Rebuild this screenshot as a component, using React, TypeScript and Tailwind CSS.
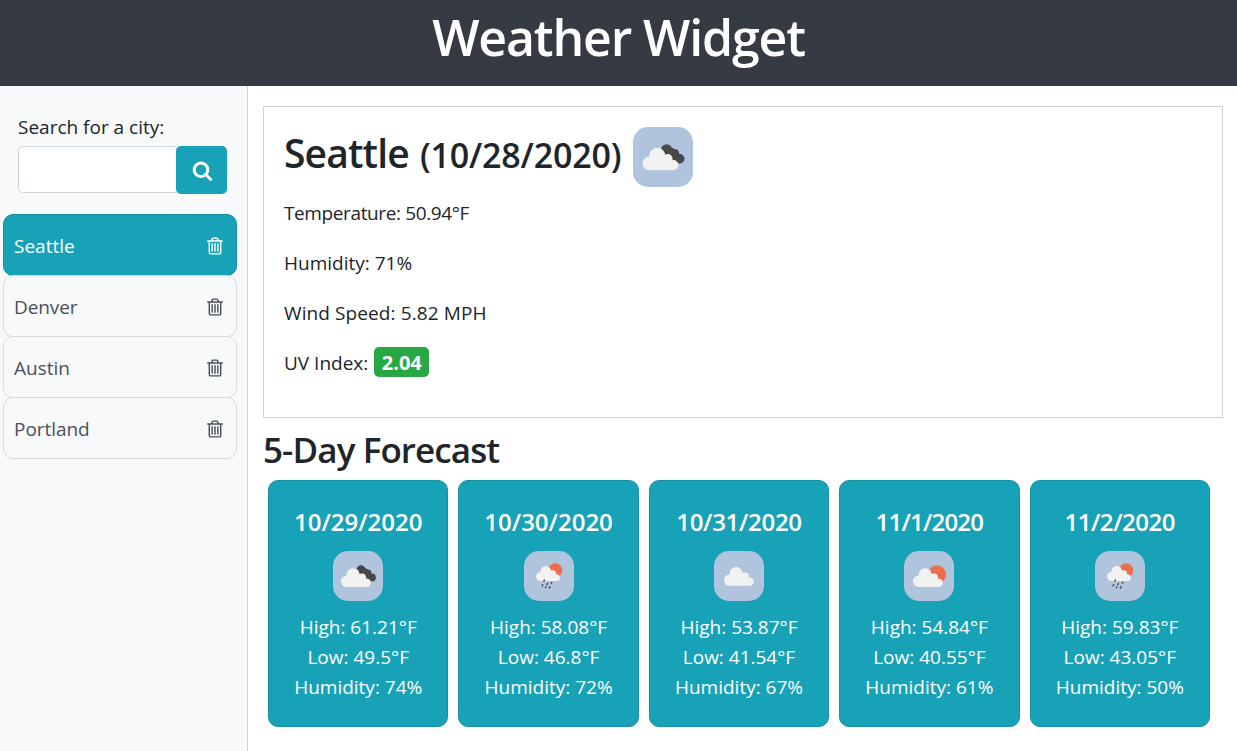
import React from "react";

type Kind = "broken" | "rain" | "cloud" | "partly";

const cities = [
  { name: "Seattle", tracking: "tracking-normal" },
  { name: "Denver", tracking: "tracking-[-0.1px]" },
  { name: "Austin", tracking: "tracking-normal" },
  { name: "Portland", tracking: "tracking-[-0.05px]" },
];

const days: { date: string; tracking: string; kind: Kind; high: string; low: string; humidity: string }[] = [
  { date: "10/29/2020", tracking: "tracking-normal", kind: "broken", high: "61.21", low: "49.5", humidity: "74" },
  { date: "10/30/2020", tracking: "tracking-normal", kind: "rain", high: "58.08", low: "46.8", humidity: "72" },
  { date: "10/31/2020", tracking: "tracking-[-0.3px]", kind: "cloud", high: "53.87", low: "41.54", humidity: "67" },
  { date: "11/1/2020", tracking: "tracking-[-0.8px]", kind: "partly", high: "54.84", low: "40.55", humidity: "61" },
  { date: "11/2/2020", tracking: "tracking-[-0.45px]", kind: "rain", high: "59.83", low: "43.05", humidity: "50" },
];

function TrashIcon() {
  return (
    <svg viewBox="0 0 1792 1792" className="h-5 w-5" fill="currentColor">
      <path d="M704 1376v-704q0-14-9-23t-23-9h-64q-14 0-23 9t-9 23v704q0 14 9 23t23 9h64q14 0 23-9t9-23zm256 0v-704q0-14-9-23t-23-9h-64q-14 0-23 9t-9 23v704q0 14 9 23t23 9h64q14 0 23-9t9-23zm256 0v-704q0-14-9-23t-23-9h-64q-14 0-23 9t-9 23v704q0 14 9 23t23 9h64q14 0 23-9t9-23zm128 84v-948h-896v948q0 22 7 40.5t14.5 27 10.5 8.5h832q3 0 10.5-8.5t14.5-27 7-40.5zm-672-1076h448l-48-117q-7-9-17-11h-317q-10 2-17 11zm928 32v64q0 14-9 23t-23 9h-96v948q0 83-47 143.5t-113 60.5h-832q-66 0-113-58.5t-47-141.5v-952h-96q-14 0-23-9t-9-23v-64q0-14 9-23t23-9h309l70-167q15-37 54-63t79-26h320q40 0 79 26t54 63l70 167h309q14 0 23 9t9 23z" />
    </svg>
  );
}

function SearchIcon() {
  return (
    <svg viewBox="0 0 1792 1792" className="h-[21px] w-[21px]" fill="currentColor">
      <path d="M1216 832q0-185-131.5-316.5t-316.5-131.5-316.5 131.5-131.5 316.5 131.5 316.5 316.5 131.5 316.5-131.5 131.5-316.5zm512 832q0 52-38 90t-90 38q-54 0-90-38l-343-342q-179 124-399 124-143 0-273.5-55.5t-225-150-150-225-55.5-273.5 55.5-273.5 150-225 225-150 273.5-55.5 273.5 55.5 225 150 150 225 55.5 273.5q0 220-124 399l343 343q37 37 37 90z" />
    </svg>
  );
}

function Cloud({ transform }: { transform?: string }) {
  return (
    <g transform={transform} fill="#f2f2f2">
      <circle cx="13.7" cy="30.3" r="5.7" />
      <circle cx="20.2" cy="23.9" r="6.6" />
      <circle cx="29" cy="26.6" r="4" />
      <circle cx="33.6" cy="31.8" r="4.2" />
      <path d="M13.7 25h15l5 4v7h-20z" />
    </g>
  );
}

function WeatherIcon({ kind, className }: { kind: Kind; className: string }) {
  return (
    <svg viewBox="0 0 50 50" className={className}>
      {kind === "broken" && (
        <>
          <g fill="#484848">
            <circle cx="28" cy="18.9" r="4.6" />
            <circle cx="35" cy="22" r="3.4" />
            <circle cx="39" cy="26.5" r="3.9" />
            <path d="M25 22l5-6 6 3 3 5-1 6-8-2z" />
          </g>
          <Cloud />
        </>
      )}
      {kind === "partly" && (
        <>
          <circle cx="33" cy="23.3" r="9" fill="#ec6e4c" />
          <Cloud transform="translate(1 0)" />
        </>
      )}
      {kind === "cloud" && <Cloud transform="translate(2 -1.2)" />}
      {kind === "rain" && (
        <>
          <circle cx="31.2" cy="19.4" r="7.1" fill="#ec6e4c" />
          <Cloud transform="translate(5.6 1.2) scale(.8)" />
          <g stroke="#484848" strokeWidth="1.4" strokeLinecap="round">
            <path d="M20.3 29l-.5 1.1M18.7 33.6l-.5 1.3M23.5 32.4l-.6 1.4M21.9 35.9l-.4 .9M27.7 31.4l-.4 .8M26 35.7l-.6 1.4" />
          </g>
        </>
      )}
    </svg>
  );
}

export default function App() {
  return (
    <div className="flex h-[751px] flex-col overflow-hidden bg-white font-['Open_Sans','Noto_Sans',sans-serif] text-[19px] leading-[30px] text-[#212529]">
      <header className="flex h-[86px] shrink-0 justify-center bg-[#363a42] pt-[7px]">
        <h1 className="text-[50px] leading-[60px] font-semibold tracking-[-1.15px] whitespace-nowrap text-white">
          Weather Widget
        </h1>
      </header>
      <div className="flex flex-1">
        <aside className="w-[248px] shrink-0 border-r border-[#d0d1d3] bg-[#f8f9fb] pt-[26px] pr-[10px] pl-[3px]">
          <div className="pl-[15px]">
            <label htmlFor="city" className="block">
              Search for a city:
            </label>
            <div className="mt-1 flex items-start">
              <input
                id="city"
                className="h-[47px] w-[158px] rounded-l-[5px] border border-r-0 border-[#ced4da] bg-white px-3 outline-none"
              />
              <button className="flex h-12 w-[51px] items-center justify-center rounded-[5px] bg-[#18a2b8] pl-px text-white">
                <SearchIcon />
              </button>
            </div>
          </div>
          <ul className="mt-5">
            {cities.map((city, i) => (
              <li
                key={city.name}
                className={
                  i === 0
                    ? "flex h-[62px] items-center justify-between rounded-[10px] border border-[#168fa2] bg-[#18a2b8] pr-[11px] pl-[10px] text-white"
                    : "-mt-px flex h-[62px] items-center justify-between rounded-[10px] border border-[#d9dadc] bg-[#f8f9fb] pr-[11px] pl-[10px] text-[#495057]"
                }
              >
                <span className={city.tracking + " mt-[2px]"}>{city.name}</span>
                <span className="mt-[2px]">
                  <TrashIcon />
                </span>
              </li>
            ))}
          </ul>
        </aside>
        <main className="flex-1 pt-5 pr-[14px] pl-[15px]">
          <section className="h-[312px] border border-[#d2d2d2] px-5 pt-5">
            <div className="flex h-[60px] items-center">
              <h2 className="-mt-[9px] flex items-baseline font-semibold whitespace-nowrap">
                <span className="w-[124px] text-[39px] leading-[48px] tracking-[-0.85px]">Seattle</span>
                <span className="ml-3 w-[202px] text-[34px] tracking-[-0.2px]">(10/28/2020)</span>
              </h2>
              <WeatherIcon kind="broken" className="ml-[11px] h-[60px] w-[60px] rounded-[15px] bg-[#b0c4de]" />
            </div>
            <div className="mt-[11px] flex flex-col gap-5">
              <p className="tracking-[-0.38px]">Temperature: 50.94°F</p>
              <p>Humidity: 71%</p>
              <p className="tracking-[0.1px]">Wind Speed: 5.82 MPH</p>
              <p className="flex">
                UV Index:
                <span className="-mt-px ml-[6px] flex h-[30px] w-[55px] items-center justify-center rounded-[5px] bg-[#28a745] pt-px text-[20px] font-bold text-white">
                  2.04
                </span>
              </p>
            </div>
          </section>
          <h3 className="mt-[11px] h-[43px] text-[35px] leading-[42px] font-semibold tracking-[-0.9px] whitespace-nowrap">
            5-Day Forecast
          </h3>
          <section className="mt-2 mr-[13px] ml-[5px] grid grid-cols-5 gap-[10px]">
            {days.map((d) => (
              <article
                key={d.date}
                className="flex h-[247px] flex-col items-center rounded-[10px] border border-[#168fa2] bg-[#18a2b8] pt-[26px] whitespace-nowrap text-white"
              >
                <h4 className={d.tracking + " text-[24px] leading-[30px] font-semibold"}>{d.date}</h4>
                <WeatherIcon kind={d.kind} className="mt-[14px] mb-[11px] h-[50px] w-[50px] rounded-[15px] bg-[#b0c4de]" />
                <p>High: {d.high}°F</p>
                <p>Low: {d.low}°F</p>
                <p>Humidity: {d.humidity}%</p>
              </article>
            ))}
          </section>
        </main>
      </div>
    </div>
  );
}
